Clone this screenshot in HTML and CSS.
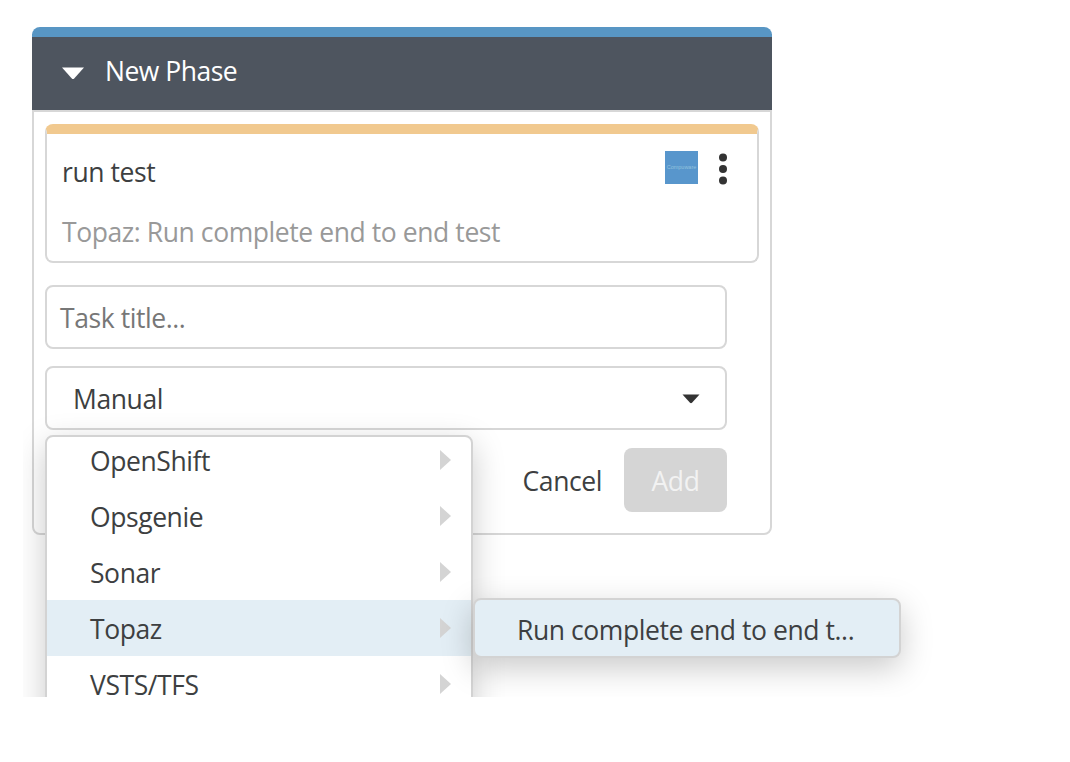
FILE: index.html
```html
<!DOCTYPE html>
<html lang="en">
<head>
<meta charset="utf-8">
<title>New Phase</title>
<link rel="stylesheet" href="styles.css">
</head>
<body>
<main class="viewport">
  <section class="phase">
    <header class="phase-header">
      <svg class="collapse" width="24" height="13" viewBox="0 0 24 13"><path d="M1 .5h22L13.2 11.4q-1.2 1-2.4 0z" fill="#fff"/></svg>
      <h1 class="phase-title">New Phase</h1>
    </header>
    <div class="phase-body">
      <article class="task">
        <div class="task-top">
          <span class="task-name">run test</span>
          <span class="task-logo">Compuware</span>
          <svg class="kebab" width="10" height="32" viewBox="0 0 10 32" fill="#333"><circle cx="5" cy="4.4" r="4"/><circle cx="5" cy="16" r="4"/><circle cx="5" cy="27.6" r="4"/></svg>
        </div>
        <p class="task-type">Topaz: Run complete end to end test</p>
      </article>
      <div class="field title-field">Task title...</div>
      <div class="select-wrap">
        <div class="field select"><span>Manual</span>
          <svg width="18" height="10" viewBox="0 0 18 10"><path d="M.5.5h17L10 8.8q-1 .8-2 0z" fill="#333"/></svg>
        </div>
        <div class="menu">
          <ul class="menu-list">
            <li class="item"><span>OpenShift</span><i class="arrow"></i></li>
            <li class="item"><span>Opsgenie</span><i class="arrow"></i></li>
            <li class="item"><span>Sonar</span><i class="arrow"></i></li>
            <li class="item active"><span>Topaz</span><i class="arrow"></i></li>
            <li class="item"><span>VSTS/TFS</span><i class="arrow"></i></li>
          </ul>
          <div class="submenu">Run complete end to end t...</div>
        </div>
      </div>
      <div class="actions">
        <span class="cancel">Cancel</span>
        <span class="add">Add</span>
      </div>
    </div>
  </section>
</main>
</body>
</html>
```
FILE: styles.css
```css
* { box-sizing: border-box; }
body {
  margin: 0;
  background: #fff;
  color: #3d3f41;
  font: 26.5px/36px "Open Sans", "Noto Sans", sans-serif;
  letter-spacing: -.42px;
  white-space: nowrap;
}
.viewport {
  width: 1040px;
  height: 697px;
  margin-left: 23px;
  padding: 27px 0 0 9px;
  overflow: hidden;
}
.phase { width: 740px; }
.phase-header {
  display: flex;
  align-items: center;
  gap: 20px;
  height: 83px;
  padding: 0 0 2px 29px;
  border-top: 10px solid #5896c4;
  border-radius: 8px 8px 0 0;
  background: #4e555f;
}
.collapse { margin-top: 2px; }
.phase-title {
  margin: 0 0 4px;
  font-size: 26.5px;
  font-weight: 400;
  letter-spacing: -.5px;
  color: #fff;
}
.phase-body {
  height: 425px;
  padding: 12px 11px 0;
  border: 2px solid #d7d7d7;
  border-radius: 0 0 8px 8px;
}
.task {
  height: 139px;
  padding: 17px 29px 0 15px;
  border: 2px solid #d7d7d7;
  border-top: 10px solid #f1c98f;
  border-radius: 8px;
}
.task-top {
  display: flex;
  align-items: flex-start;
  height: 60px;
}
.task-name { margin-top: 3px; flex: 1; }
.task-logo {
  width: 33px;
  height: 33px;
  margin-right: 20px;
  background: #5896cc;
  color: #92c2dc;
  font: 5.5px/33px "Liberation Sans", sans-serif;
  letter-spacing: 0;
  text-align: center;
}
.kebab { margin-top: 2px; }
.task-type { margin: 3px 0 0; color: #999; }
.field {
  width: 682px;
  height: 64px;
  border: 2px solid #d7d7d7;
  border-radius: 8px;
}
.title-field {
  margin-top: 22px;
  padding: 13px 13px;
  color: #777;
}
.select-wrap { position: relative; margin-top: 17px; }
.select {
  display: flex;
  align-items: center;
  justify-content: space-between;
  padding: 1px 25px 0 26px;
}
.menu {
  position: absolute;
  left: 0;
  top: 69px;
  z-index: 2;
  width: 428px;
  height: 420px;
  border: 2px solid #d3d3d3;
  border-radius: 8px;
  background: #fff;
  box-shadow: 0 10px 32px rgba(0, 0, 0, .21);
}
.menu-list { margin: -5px 0 0; padding: 0; list-style: none; }
.item {
  display: flex;
  align-items: center;
  justify-content: space-between;
  height: 56px;
  padding: 2px 20px 0 43px;
}
.active { background: #e3eef5; }
.arrow {
  margin-top: -2px;
  border: solid transparent;
  border-width: 10px 0 10px 11px;
  border-left-color: #d4d4d4;
}
.submenu {
  position: absolute;
  left: 426px;
  top: 161px;
  width: 428px;
  height: 60px;
  padding: 12px 42px 0;
  border: 2px solid #d3d3d3;
  border-radius: 8px;
  background: #e3eef5;
  box-shadow: 0 10px 32px rgba(0, 0, 0, .21);
}
.actions {
  display: flex;
  justify-content: flex-end;
  align-items: center;
  gap: 22px;
  margin-top: 18px;
  padding-right: 32px;
}
.cancel { margin-top: 1px; }
.add {
  width: 103px;
  height: 64px;
  border-radius: 8px;
  background: #d5d5d5;
  color: #f2f2f2;
  line-height: 66px;
  text-align: center;
}
```
